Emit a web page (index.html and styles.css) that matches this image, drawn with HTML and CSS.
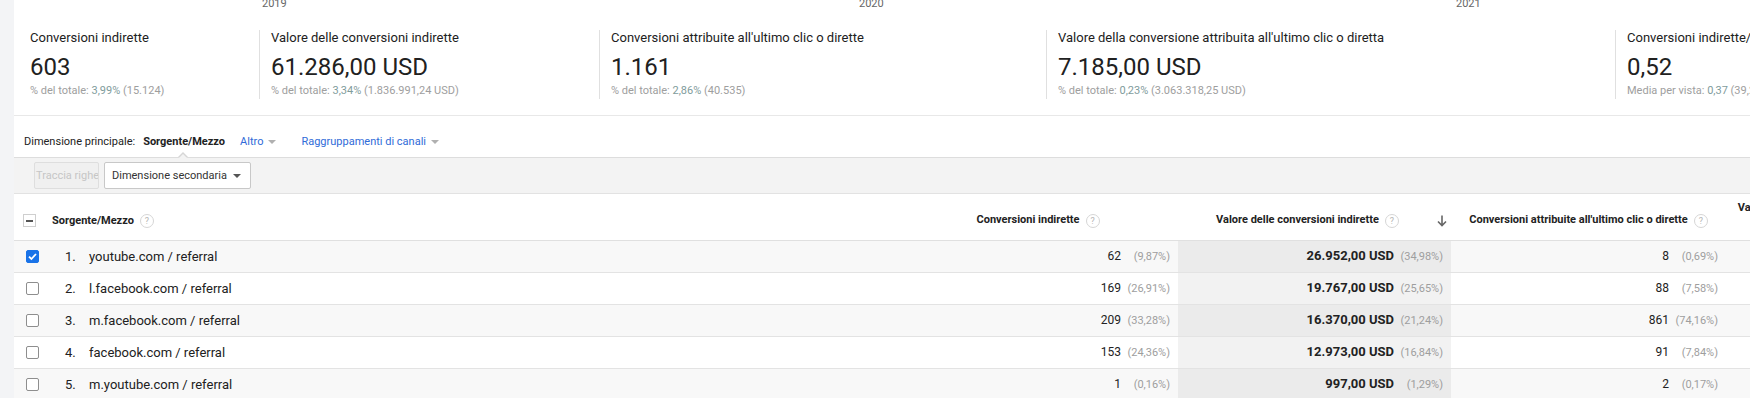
FILE: index.html
```html
<!DOCTYPE html>
<html lang="it">
<head>
<meta charset="utf-8">
<title>Conversioni indirette</title>
<link rel="stylesheet" href="styles.css">
</head>
<body>
<div class="page">
  <aside class="rail"></aside>
  <main class="main">
    <div class="axis"><span>2019</span><span>2020</span><span>2021</span></div>

    <div class="metrics">
      <div class="metric">
        <div class="m-label">Conversioni indirette</div>
        <div class="m-value">603</div>
        <div class="m-sub">% del totale: <span class="m-hl">3,99%</span> (15.124)</div>
      </div>
      <div class="metric">
        <div class="m-label">Valore delle conversioni indirette</div>
        <div class="m-value">61.286,00 USD</div>
        <div class="m-sub">% del totale: <span class="m-hl">3,34%</span> (1.836.991,24 USD)</div>
      </div>
      <div class="metric">
        <div class="m-label">Conversioni attribuite all'ultimo clic o dirette</div>
        <div class="m-value">1.161</div>
        <div class="m-sub">% del totale: <span class="m-hl">2,86%</span> (40.535)</div>
      </div>
      <div class="metric">
        <div class="m-label">Valore della conversione attribuita all'ultimo clic o diretta</div>
        <div class="m-value">7.185,00 USD</div>
        <div class="m-sub">% del totale: <span class="m-hl">0,23%</span> (3.063.318,25 USD)</div>
      </div>
      <div class="metric">
        <div class="m-label">Conversioni indirette/Conversioni attribuite all'ultimo clic o dirette</div>
        <div class="m-value">0,52</div>
        <div class="m-sub">Media per vista: <span class="m-hl">0,37</span> (39,26%)</div>
      </div>
    </div>

    <div class="dimbar">
      <span class="dim-label">Dimensione principale:</span>
      <span class="dim-active">Sorgente/Mezzo</span>
      <a class="dim-link">Altro<i class="caret"></i></a>
      <a class="dim-link">Raggruppamenti di canali<i class="caret"></i></a>
    </div>

    <div class="toolbar">
      <button class="btn btn-disabled" disabled>Traccia righe</button>
      <button class="btn btn-select">Dimensione secondaria<i class="caret caret-dark"></i></button>
    </div>

    <table class="grid">
      <colgroup>
        <col class="c-dim"><col class="c-num"><col class="c-sort"><col class="c-num2"><col class="c-more">
      </colgroup>
      <thead>
        <tr>
          <th class="h-dim"><div class="hcell"><span class="cb-minus"></span><span class="h-title">Sorgente/Mezzo</span><span class="help">?</span></div></th>
          <th class="h-num"><span class="h-title">Conversioni indirette</span><span class="help">?</span></th>
          <th class="h-num h-sorted"><span class="h-title">Valore delle conversioni indirette</span><span class="help">?</span>
            <svg class="sort-arrow" width="10" height="12" viewBox="0 0 10 12"><path d="M5 0.5V10.5M1 6.5L5 10.5L9 6.5" fill="none" stroke="#666" stroke-width="1.6"/></svg>
          </th>
          <th class="h-num"><span class="h-title">Conversioni attribuite all'ultimo clic o dirette</span><span class="help">?</span></th>
          <th class="h-more"><span class="h-title">Valore della conversione attribuita all'ultimo clic o diretta</span></th>
        </tr>
      </thead>
      <tbody>
        <tr class="odd">
          <td><div class="dcell"><span class="cb cb-on"><svg width="11" height="11" viewBox="0 0 11 11"><path d="M2 5.6L4.4 8L9 3" fill="none" stroke="#fff" stroke-width="1.8"/></svg></span><span class="idx">1.</span><span class="src">youtube.com / referral</span></div></td>
          <td class="num"><span class="v">62</span><span class="p">(9,87%)</span></td>
          <td class="num sorted"><span class="v b">26.952,00 USD</span><span class="p">(34,98%)</span></td>
          <td class="num"><span class="v">8</span><span class="p">(0,69%)</span></td>
          <td class="num"><span class="v">1.240,00 USD</span><span class="p">(17,26%)</span></td>
        </tr>
        <tr>
          <td><div class="dcell"><span class="cb"></span><span class="idx">2.</span><span class="src">l.facebook.com / referral</span></div></td>
          <td class="num"><span class="v">169</span><span class="p">(26,91%)</span></td>
          <td class="num sorted"><span class="v b">19.767,00 USD</span><span class="p">(25,65%)</span></td>
          <td class="num"><span class="v">88</span><span class="p">(7,58%)</span></td>
          <td class="num"><span class="v">1.034,00 USD</span><span class="p">(14,39%)</span></td>
        </tr>
        <tr class="odd">
          <td><div class="dcell"><span class="cb"></span><span class="idx">3.</span><span class="src">m.facebook.com / referral</span></div></td>
          <td class="num"><span class="v">209</span><span class="p">(33,28%)</span></td>
          <td class="num sorted"><span class="v b">16.370,00 USD</span><span class="p">(21,24%)</span></td>
          <td class="num"><span class="v">861</span><span class="p">(74,16%)</span></td>
          <td class="num"><span class="v">2.905,00 USD</span><span class="p">(40,43%)</span></td>
        </tr>
        <tr>
          <td><div class="dcell"><span class="cb"></span><span class="idx">4.</span><span class="src">facebook.com / referral</span></div></td>
          <td class="num"><span class="v">153</span><span class="p">(24,36%)</span></td>
          <td class="num sorted"><span class="v b">12.973,00 USD</span><span class="p">(16,84%)</span></td>
          <td class="num"><span class="v">91</span><span class="p">(7,84%)</span></td>
          <td class="num"><span class="v">598,00 USD</span><span class="p">(8,32%)</span></td>
        </tr>
        <tr class="odd">
          <td><div class="dcell"><span class="cb"></span><span class="idx">5.</span><span class="src">m.youtube.com / referral</span></div></td>
          <td class="num"><span class="v">1</span><span class="p">(0,16%)</span></td>
          <td class="num sorted"><span class="v b">997,00 USD</span><span class="p">(1,29%)</span></td>
          <td class="num"><span class="v">2</span><span class="p">(0,17%)</span></td>
          <td class="num"><span class="v">0,00 USD</span><span class="p">(0,00%)</span></td>
        </tr>
      </tbody>
    </table>
  </main>
</div>
</body>
</html>
```

FILE: styles.css
```css
* { box-sizing: border-box; }

body {
  margin: 0;
  font-family: Roboto, "Liberation Sans", sans-serif;
  color: #212121;
  background: #ffffff;
}

.page {
  display: flex;
  width: 1750px;
  height: 398px;
  overflow: hidden;
}

.rail {
  flex: none;
  width: 14px;
  background: #f3f4f6;
}

.main {
  flex: 1;
  min-width: 0;
  overflow: hidden;
  background: #ffffff;
}

/* chart axis (cut off at top) */
.axis {
  display: flex;
  height: 8px;
  overflow: hidden;
  padding-left: 248px;
  font-size: 11px;
  line-height: 13px;
  color: #666666;
}
.axis span {
  flex: none;
  width: 597px;
  margin-top: -3px;
}

/* summary metrics */
.metrics {
  display: grid;
  grid-template-columns: 245px 340px 447px 569px 1fr;
  margin-top: 22px;
}
.metric {
  height: 69px;
  padding-left: 11px;
  border-left: 1px solid #e0e0e0;
  white-space: nowrap;
  overflow: hidden;
}
.metric:first-child {
  border-left: 0;
  padding-left: 16px;
}
.m-label {
  font-size: 13px;
  line-height: 16px;
  color: #212121;
}
.m-value {
  margin-top: 7px;
  font-size: 24px;
  line-height: 28px;
  color: #212121;
}
.m-sub {
  margin-top: 3px;
  font-size: 11px;
  line-height: 13px;
  color: #9e9e9e;
}
.m-hl { color: #7f9c9c; }

/* primary dimension bar */
.dimbar {
  display: flex;
  align-items: center;
  margin-top: 16px;
  border-top: 1px solid #e8e8e8;
  padding: 19px 0 9px 10px;
  font-size: 11px;
  line-height: 13px;
  white-space: nowrap;
}
.dim-label { color: #222222; margin-right: 8px; }
.dim-active { font-weight: 700; color: #222222; margin-right: 15px; }
.dim-link {
  display: inline-flex;
  align-items: center;
  color: #2f6bd8;
  margin-right: 25px;
}
.caret {
  display: inline-block;
  width: 0;
  height: 0;
  margin-left: 5px;
  border-left: 4px solid transparent;
  border-right: 4px solid transparent;
  border-top: 4px solid #b0b0b0;
}
.caret-dark {
  margin-left: auto;
  margin-right: 9px;
  border-top-color: #555555;
}

/* toolbar band */
.toolbar {
  position: relative;
  display: flex;
  gap: 5px;
  padding: 4px 20px 4px;
  background: #f3f3f3;
  border-top: 1px solid #dddddd;
  border-bottom: 1px solid #e2e2e2;
}
.toolbar::before {
  content: "";
  position: absolute;
  top: -6px;
  left: 164px;
  border-left: 5px solid transparent;
  border-right: 5px solid transparent;
  border-bottom: 5px solid #d6d6d6;
}
.toolbar::after {
  content: "";
  position: absolute;
  top: -4px;
  left: 165px;
  border-left: 4px solid transparent;
  border-right: 4px solid transparent;
  border-bottom: 4px solid #f3f3f3;
}
.btn {
  height: 27px;
  border: 1px solid #d4d4d4;
  border-radius: 2px;
  font-family: Roboto, "Liberation Sans", sans-serif;
  font-size: 11px;
  white-space: nowrap;
}
.btn-disabled {
  width: 65px;
  padding: 0 1px;
  overflow: hidden;
  text-align: left;
  background: #f0f0f0;
  border-color: #dedede;
  color: #c6c6c6;
}
.btn-select {
  display: flex;
  align-items: center;
  width: 147px;
  padding: 0 0 0 7px;
  background: #ffffff;
  border-color: #c8c8c8;
  color: #333333;
}

/* data table */
.grid {
  width: 1913px;
  table-layout: fixed;
  border-collapse: separate;
  border-spacing: 0;
}
.c-dim { width: 884px; }
.c-num { width: 280px; }
.c-sort { width: 273px; }
.c-num2 { width: 275px; }
.c-more { width: 201px; }

th {
  height: 47px;
  padding: 7px 0 0;
  border-bottom: 1px solid #e0e0e0;
  font-size: 11px;
  line-height: 14px;
  font-weight: 700;
  color: #222222;
  white-space: nowrap;
  vertical-align: middle;
}
.hcell {
  display: flex;
  align-items: center;
  padding-left: 9px;
}
.cb-minus {
  position: relative;
  flex: none;
  width: 13px;
  height: 13px;
  border: 1px solid #cfcfcf;
  background: #ffffff;
  margin-right: 16px;
}
.cb-minus::after {
  content: "";
  position: absolute;
  left: 2px;
  right: 2px;
  top: 5px;
  height: 2px;
  background: #555555;
}
.h-num { text-align: center; }
.h-sorted {
  position: relative;
  padding-right: 14px;
}
.sort-arrow {
  position: absolute;
  right: 4px;
  top: 21px;
}
.h-more {
  text-align: center;
  padding: 7px 8px 0 0;
  white-space: normal;
  line-height: 14px;
  vertical-align: top;
}
.help {
  display: inline-block;
  width: 14px;
  height: 14px;
  margin-left: 6px;
  border: 1px solid #d6d6d6;
  border-radius: 50%;
  font-size: 9px;
  font-weight: 400;
  line-height: 12px;
  text-align: center;
  color: #b5b5b5;
  vertical-align: middle;
}

td {
  padding: 0;
  border-bottom: 1px solid #e3e3e3;
  font-size: 12px;
  line-height: 31px;
  white-space: nowrap;
  overflow: hidden;
}
tr.odd td { background: #f8f8f8; }
td.sorted { background: #f2f2f2; }
tr.odd td.sorted { background: #ebebeb; }

.dcell {
  display: flex;
  align-items: center;
  height: 31px;
  padding-left: 12px;
  font-size: 13px;
  line-height: 16px;
  color: #212121;
}
.cb {
  flex: none;
  display: flex;
  align-items: center;
  justify-content: center;
  width: 13px;
  height: 13px;
  border: 1px solid #8e8e8e;
  border-radius: 2px;
  background: #ffffff;
}
.cb-on {
  border-color: #1a73e8;
  background: #1a73e8;
}
.idx {
  flex: none;
  width: 24px;
  margin-left: 26px;
}

.num {
  text-align: right;
  padding-right: 8px;
}
.v {
  font-size: 12px;
  line-height: 1;
  color: #222222;
}
.v.b {
  font-size: 13px;
  font-weight: 700;
}
.p {
  display: inline-block;
  min-width: 46px;
  margin-left: 3px;
  text-align: right;
  font-size: 11px;
  line-height: 1;
  color: #9e9e9e;
}
```
